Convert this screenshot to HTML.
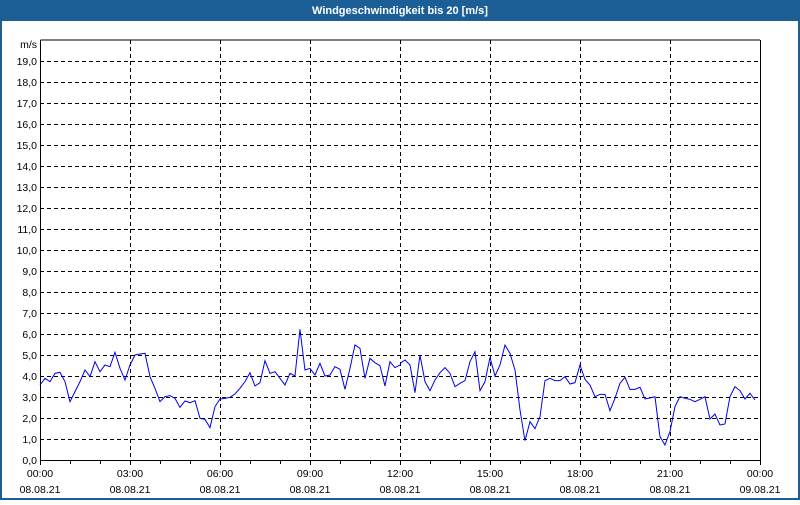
<!DOCTYPE html>
<html><head><style>
body{margin:0;width:800px;height:500px;overflow:hidden;background:#fff;font-family:"Liberation Sans",sans-serif}
</style></head><body>
<svg width="800" height="500" xmlns="http://www.w3.org/2000/svg" font-family="Liberation Sans, sans-serif" font-size="10.5">
<rect x="0" y="0" width="800" height="500" fill="#1c5f96"/>
<rect x="2" y="21" width="796" height="477" fill="#fff"/>
<text x="400" y="14" fill="#fff" font-weight="bold" font-size="11" text-anchor="middle">Windgeschwindigkeit bis 20 [m/s]</text>
<g stroke="#000" stroke-dasharray="4,3" stroke-width="1">
<path d="M40 439.5H760M40 418.5H760M40 397.5H760M40 376.5H760M40 355.5H760M40 334.5H760M40 313.5H760M40 292.5H760M40 271.5H760M40 250.5H760M40 229.5H760M40 208.5H760M40 187.5H760M40 166.5H760M40 145.5H760M40 124.5H760M40 103.5H760M40 82.5H760M40 61.5H760"/>
<path d="M130.5 40V460M220.5 40V460M310.5 40V460M400.5 40V460M490.5 40V460M580.5 40V460M670.5 40V460"/>
</g>
<path d="M40.5 40V460.5H760M760.5 40V465M40.5 40H760" stroke="#000" fill="none"/>
<g stroke="#000"><path d="M40.5 460V465M70.5 460V464M100.5 460V464M130.5 460V465M160.5 460V464M190.5 460V464M220.5 460V465M250.5 460V464M280.5 460V464M310.5 460V465M340.5 460V464M370.5 460V464M400.5 460V465M430.5 460V464M460.5 460V464M490.5 460V465M520.5 460V464M550.5 460V464M580.5 460V465M610.5 460V464M640.5 460V464M670.5 460V465M700.5 460V464M730.5 460V464"/></g>
<g text-anchor="end" fill="#000">
<text x="37" y="48">m/s</text>
<text x="37" y="65">19,0</text><text x="37" y="86">18,0</text><text x="37" y="107">17,0</text><text x="37" y="128">16,0</text><text x="37" y="149">15,0</text><text x="37" y="170">14,0</text><text x="37" y="191">13,0</text><text x="37" y="212">12,0</text><text x="37" y="233">11,0</text><text x="37" y="254">10,0</text><text x="37" y="275">9,0</text><text x="37" y="296">8,0</text><text x="37" y="317">7,0</text><text x="37" y="338">6,0</text><text x="37" y="359">5,0</text><text x="37" y="380">4,0</text><text x="37" y="401">3,0</text><text x="37" y="422">2,0</text><text x="37" y="443">1,0</text><text x="37" y="464">0,0</text>
</g>
<g text-anchor="middle" fill="#000">
<text x="40" y="477">00:00</text><text x="130" y="477">03:00</text><text x="220" y="477">06:00</text><text x="310" y="477">09:00</text><text x="400" y="477">12:00</text><text x="490" y="477">15:00</text><text x="580" y="477">18:00</text><text x="670" y="477">21:00</text><text x="760" y="477">00:00</text>
<text x="40" y="493">08.08.21</text><text x="130" y="493">08.08.21</text><text x="220" y="493">08.08.21</text><text x="310" y="493">08.08.21</text><text x="400" y="493">08.08.21</text><text x="490" y="493">08.08.21</text><text x="580" y="493">08.08.21</text><text x="670" y="493">08.08.21</text><text x="760" y="493">09.08.21</text>
</g>
<g fill="none" stroke="#0000ee" stroke-width="3">
<polyline transform="translate(40,320) scale(0.3333)" points="0,195 15,175 30,185 45,160 60,157 75,185 90,245 105,215 120,185 135,150 150,170 165,125 180,155 195,135 210,140 225,97 240,145 255,180 270,135 285,105 300,102 315,100 330,170 345,205 360,245 375,230 390,227 405,235 420,262 435,243 450,248 465,242 480,295 495,298 510,323 525,260 540,237 555,235 570,232 585,222 600,205 615,185 630,158 645,198 660,188 675,122 690,160 705,155 720,175 735,195 750,160 765,168 780,28 795,150 810,145 825,165 840,130 855,168 870,165 885,140 900,148 915,208 930,145 945,75 960,85 975,175 990,115 1005,128 1020,137 1035,198 1050,125 1065,143 1080,135"/>
<polyline transform="translate(400,320) scale(0.3333)" points="0,130 15,120 30,135 45,218 60,105 75,185 90,212 105,180 120,158 135,143 150,160 165,200 180,190 195,182 210,125 225,95 240,212 255,185 270,112 285,168 300,135 315,75 330,100 345,150 360,270 375,362 390,305 405,326 420,290 435,182 450,175 465,182 480,182 495,170 510,192 525,188 540,135 555,178 570,195 585,230 600,223 615,223 630,272 645,235 660,190 675,172 690,208 705,208 720,202 735,237 750,234 765,230 780,350 795,375 810,335 825,260 840,230 855,235 870,238 885,245 900,238 915,230 930,297 945,282 960,315 975,312 990,230 1005,200 1020,212 1035,237 1050,220 1065,240"/>
</g>
</svg>
</body></html>
